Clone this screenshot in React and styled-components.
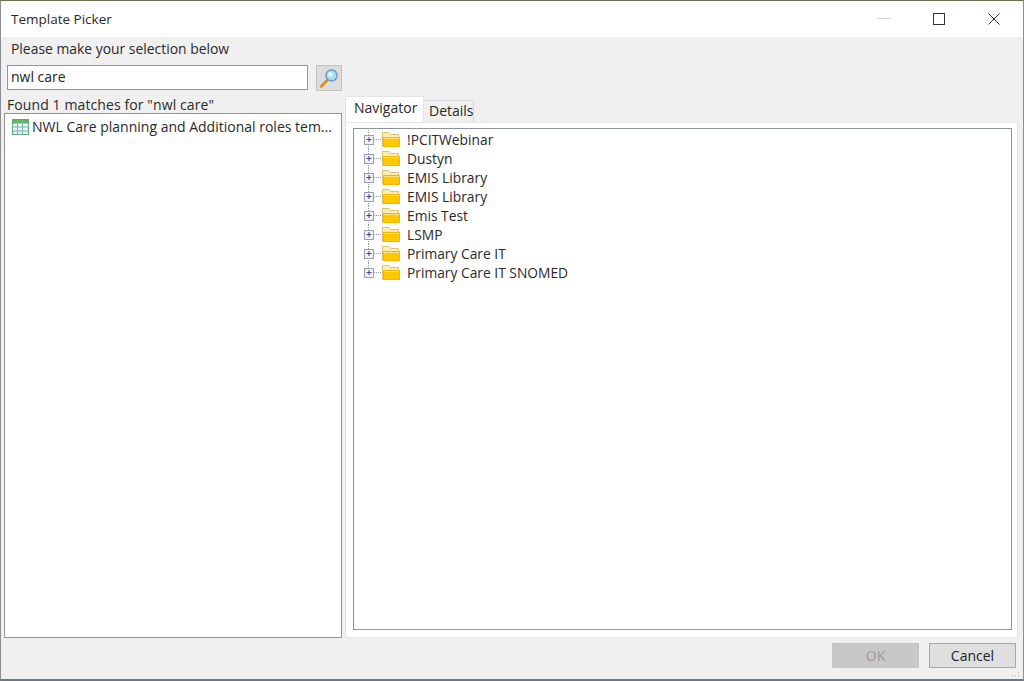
import React from "react";
import styled, { createGlobalStyle } from "styled-components";

const Global = createGlobalStyle`
  html, body { margin: 0; padding: 0; background: #f0f0f0; }
  * { box-sizing: border-box; }
`;

const Window = styled.div`
  width: 1024px; height: 681px; display: flex; flex-direction: column;
  background: #f0f0f0; color: #2a2a2a;
  font-family: "Open Sans", "Noto Sans", sans-serif; font-size: 14px; line-height: 19px;
  border-top: 1px solid #6f7050; border-left: 1px solid #8a8f94; border-right: 1px solid #8a8f94;
  border-bottom: 2px solid #6d7780;
`;
const TitleBar = styled.div`
  height: 36px; flex: none; background: #fff; display: flex; align-items: center; padding-left: 10px;
`;
const Title = styled.div`flex: 1; font-size: 13.5px;`;
const WinButton = styled.div`
  width: 55px; height: 36px; display: flex; align-items: center; justify-content: center;
  margin-right: ${p => p.$mr || 0}px;
`;
const Body = styled.div`
  flex: 1; min-height: 0; display: flex; flex-direction: column;
`;
const Prompt = styled.div`height: 28px; padding: 2px 0 0 10px; flex: none; font-size: 13.9px;`;
const SearchRow = styled.div`
  display: flex; gap: 8px; padding-left: 6px; height: 26px; flex: none;
`;
const SearchInput = styled.div`
  width: 301px; height: 25px; background: #fff; border: 1px solid #8d959c;
  padding: 1px 3px; color: #222;
`;
const SearchButton = styled.div`
  width: 26px; height: 26px; background: #dcdcdc; border: 1px solid #c2c2c2;
  display: flex; align-items: center; justify-content: center;
`;
const Main = styled.div`
  flex: 1; min-height: 0; display: flex; gap: 3px; padding: 5px 5px 0 3px;
`;
const LeftColumn = styled.div`
  width: 338px; flex: none; display: flex; flex-direction: column;
`;
const FoundLabel = styled.div`height: 17px; padding-left: 3px; line-height: 18px; letter-spacing: 0.1px;`;
const ResultList = styled.div`
  flex: 1; background: #fff; border: 1px solid #8d959c; padding: 3px 0 0 7px;
`;
const ResultRow = styled.div`
  display: flex; align-items: center; gap: 3px; height: 19px; white-space: nowrap;
`;
const RightColumn = styled.div`
  flex: 1; display: flex; flex-direction: column; min-width: 0;
`;
const Tabs = styled.div`display: flex; height: 26px; align-items: flex-end; flex: none;`;
const Tab = styled.div`
  height: ${p => (p.$active ? 26 : 22)}px; padding: ${p => (p.$active ? "1px 8px 0" : "0 4px 0 5px")};
  background: ${p => (p.$active ? "#fff" : "#f0f0f0")};
  border: 1px solid ${p => (p.$active ? "#e3e3e3" : "#d9d9d9")}; border-bottom: none; ${p => !p.$active && "border-left: none;"}
  width: ${p => p.$w}px; white-space: nowrap;
`;
const TabPane = styled.div`
  flex: 1; background: #fff; border: 1px solid #e3e3e3; padding: 5px 5px 7px 7px; display: flex;
`;
const TreeBox = styled.div`
  flex: 1; border: 1px solid #8d959c; padding: 1px 0 0 9px; background: #fff;
`;
const TreeRow = styled.div`
  display: flex; align-items: center; height: 19px; white-space: nowrap;
`;
const TreeLabel = styled.span`margin-left: 6px; font-size: 13.8px;`;
const Footer = styled.div`
  height: 41px; flex: none; display: flex; justify-content: flex-end; gap: 10px;
  padding: 5px 7px 0 0; position: relative;
`;
const Button = styled.div`
  width: ${p => p.$w}px; height: 25px; display: flex; align-items: center; justify-content: center;
  background: ${p => (p.$disabled ? "#c8c8c8" : "#dfdfdf")};
  border: 1px solid ${p => (p.$disabled ? "#c4c4c4" : "#a9a9a9")};
  color: ${p => (p.$disabled ? "#9c9c9c" : "#222")};
`;
const Grip = styled.svg`position: absolute; right: 2px; bottom: 1px;`;

const Plus = ({ last }) => (
  <svg width="24" height="19" viewBox="0 0 24 19" style={{ flex: "none" }}>
    <path d={last ? "M5.500 0v5" : "M5.500 0v5M5.500 14v5"} stroke="#9a9a9a" strokeDasharray="1 1" />
    <path d="M11 9.500h13" stroke="#9a9a9a" strokeDasharray="1 1" />
    <rect x="1.500" y="5.500" width="9" height="9" fill="#eef0f4" stroke="#9aa0ac" />
    <path d="M3.500 9.500h5M6 7v5" stroke="#3c4a80" />
  </svg>
);
const Folder = () => (
  <svg width="20" height="17" viewBox="0 0 20 17" style={{ flex: "none", marginLeft: -6, marginTop: -1 }}>
    <path d="M1.500 15.500V1.500h6.500l1.500 2h8v12z" fill="#ffedb0" stroke="#dcc078" />
    <path d="M2.500 6.500h16v9h-16z" fill="#ffc800" stroke="#f2b705" />
    <path d="M3 7.500h15" stroke="#ffe27a" />
  </svg>
);
const GridIcon = () => (
  <svg width="17" height="16" viewBox="0 0 17 16" style={{ flex: "none" }}>
    <rect x="0.500" y="0.500" width="16" height="15" fill="#e8f2ee" stroke="#5fa87a" />
    <rect x="1" y="1" width="15" height="3.500" fill="#5cb85c" />
    <path d="M0.500 8h16M0.500 12h16" stroke="#7fb0c0" />
    <path d="M5.500 1v14.500M10.500 1v14.500" stroke="#7fb0c0" />
  </svg>
);
const Magnifier = () => (
  <svg width="22" height="22" viewBox="0 0 22 22">
    <path d="M3 19.500L10 12.500" stroke="#e08a20" strokeWidth="2.600" strokeLinecap="round" />
    <circle cx="13.500" cy="8.500" r="5.500" fill="#a8dcf5" stroke="#6f9cc0" strokeWidth="1.400" />
    <circle cx="12.500" cy="7.500" r="2.500" fill="#dff3fc" />
  </svg>
);

const folders = ["!PCITWebinar", "Dustyn", "EMIS Library", "EMIS Library", "Emis Test", "LSMP", "Primary Care IT", "Primary Care IT SNOMED"];

export default function App() {
  return (
    <>
      <Global />
      <Window>
        <TitleBar>
          <Title>Template Picker</Title>
          <WinButton>
            <svg width="12" height="2"><path d="M0 .5h12" stroke="#d0d0d0" /></svg>
          </WinButton>
          <WinButton>
            <svg width="12" height="12"><rect x=".5" y=".5" width="11" height="11" fill="none" stroke="#333" /></svg>
          </WinButton>
          <WinButton $mr={2}>
            <svg width="12" height="12"><path d="M.5.5l11 11M11.500.5l-11 11" stroke="#333" /></svg>
          </WinButton>
        </TitleBar>
        <Body>
          <Prompt>Please make your selection below</Prompt>
          <SearchRow>
            <SearchInput>nwl care</SearchInput>
            <SearchButton><Magnifier /></SearchButton>
          </SearchRow>
          <Main>
            <LeftColumn>
              <FoundLabel>Found 1 matches for "nwl care"</FoundLabel>
              <ResultList>
                <ResultRow><GridIcon />NWL Care planning and Additional roles tem...</ResultRow>
              </ResultList>
            </LeftColumn>
            <RightColumn>
              <Tabs>
                <Tab $active $w={79}>Navigator</Tab>
                <Tab $w={50}>Details</Tab>
              </Tabs>
              <TabPane>
                <TreeBox>
                  {folders.map((f, i) => (
                    <TreeRow key={i}>
                      <Plus last={i === folders.length - 1} />
                      <Folder />
                      <TreeLabel>{f}</TreeLabel>
                    </TreeRow>
                  ))}
                </TreeBox>
              </TabPane>
            </RightColumn>
          </Main>
          <Footer>
            <Button $w={87} $disabled>OK</Button>
            <Button $w={87}>Cancel</Button>
            <Grip width="10" height="6" viewBox="0 0 10 6">
              <path d="M7 1h2M4 4h2M7 4h2M1 4h2" stroke="#b5b5b5" strokeDasharray="1 1" />
            </Grip>
          </Footer>
        </Body>
      </Window>
    </>
  );
}
